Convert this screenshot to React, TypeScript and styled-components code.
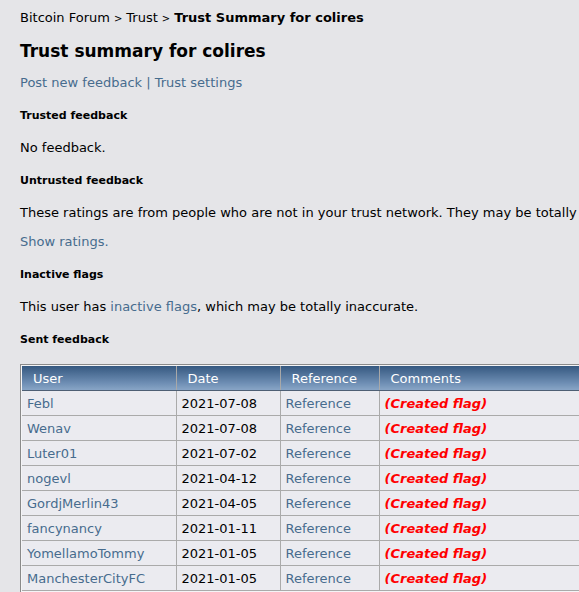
import React from "react";
import styled, { createGlobalStyle } from "styled-components";

const GlobalStyle = createGlobalStyle`
  html, body {
    margin: 0;
    padding: 0;
    overflow: hidden;
    background: #e5e5e8;
  }
  body {
    font-family: "DejaVu Sans", Verdana, sans-serif;
    color: #000;
  }
`;

const Page = styled.div`
  padding: 10px 0 0 20px;
  width: 700px;
`;

const Link = styled.a`
  color: #476c8e;
  text-decoration: none;
`;

const Breadcrumb = styled.div`
  font-size: 13px;
  line-height: 16px;
  white-space: nowrap;

  b {
    font-weight: bold;
  }
`;

const Sep = styled.span`
  font-size: 10px;
  margin: 0 4px;
`;

const Title = styled.h1`
  font-size: 17px;
  line-height: 20px;
  font-weight: bold;
  margin: 14px 0 0;
`;

const Actions = styled.div`
  font-size: 13px;
  line-height: 16px;
  margin-top: 14px;
  color: #476c8e;
`;

const Section = styled.h3`
  font-size: 11px;
  line-height: 14px;
  font-weight: bold;
  margin: 18px 0 0;
`;

const Text = styled.p<{ $gap?: number }>`
  font-size: 13px;
  line-height: 16px;
  margin: ${(p) => p.$gap ?? 17}px 0 0;
  white-space: nowrap;
`;

const TableFrame = styled.div`
  margin-top: 17px;
  display: inline-block;
  border: 1px solid #8a8a8a;
  padding: 1px;
  background: #f4f4f6;
`;

const Table = styled.table`
  border-collapse: collapse;
  table-layout: fixed;
  width: 607px;
  font-size: 13px;
`;

const HeadCell = styled.th`
  height: 24px;
  padding: 0 0 0 11px;
  text-align: left;
  font-weight: normal;
  color: #fff;
  background: linear-gradient(#355880, #6d8db3 70%, #88a5c6);
  border-left: 1px solid #a8a8a8;
  border-bottom: 1px solid #4e5f74;
  &:first-child {
    border-left: none;
  }
`;

const Cell = styled.td<{ $tone?: "link" | "plain" | "flag" }>`
  height: 24px;
  padding: 0 0 0 5px;
  background: #ebebf0;
  border: 1px solid #aaaaaa;
  white-space: nowrap;
  color: ${(p) =>
    p.$tone === "link" ? "#476c8e" : p.$tone === "flag" ? "#ff0000" : "#000"};
  font-weight: ${(p) => (p.$tone === "flag" ? "bold" : "normal")};
  font-style: ${(p) => (p.$tone === "flag" ? "italic" : "normal")};
  &:first-child {
    border-left: none;
  }
`;

const rows = [
  ["Febl", "2021-07-08"],
  ["Wenav", "2021-07-08"],
  ["Luter01", "2021-07-02"],
  ["nogevl", "2021-04-12"],
  ["GordjMerlin43", "2021-04-05"],
  ["fancynancy", "2021-01-11"],
  ["YomellamoTommy", "2021-01-05"],
  ["ManchesterCityFC", "2021-01-05"],
];

export default function App() {
  return (
    <>
      <GlobalStyle />
      <Page>
        <Breadcrumb>
          Bitcoin Forum<Sep>&gt;</Sep>Trust<Sep>&gt;</Sep>
          <b>Trust Summary for colires</b>
        </Breadcrumb>
        <Title>Trust summary for colires</Title>
        <Actions>
          <Link href="#">Post new feedback</Link> | <Link href="#">Trust settings</Link>
        </Actions>

        <Section>Trusted feedback</Section>
        <Text>No feedback.</Text>

        <Section>Untrusted feedback</Section>
        <Text>
          These ratings are from people who are not in your trust network. They may be totally
          inaccurate.
        </Text>
        <Text $gap={13}>
          <Link href="#">Show ratings.</Link>
        </Text>

        <Section>Inactive flags</Section>
        <Text>
          This user has <Link href="#">inactive flags</Link>, which may be totally inaccurate.
        </Text>

        <Section>Sent feedback</Section>
        <TableFrame>
          <Table>
            <colgroup>
              <col style={{ width: 154 }} />
              <col style={{ width: 104 }} />
              <col style={{ width: 99 }} />
              <col style={{ width: 250 }} />
            </colgroup>
            <thead>
              <tr>
                <HeadCell>User</HeadCell>
                <HeadCell>Date</HeadCell>
                <HeadCell>Reference</HeadCell>
                <HeadCell>Comments</HeadCell>
              </tr>
            </thead>
            <tbody>
              {rows.map(([user, date]) => (
                <tr key={user}>
                  <Cell $tone="link">{user}</Cell>
                  <Cell>{date}</Cell>
                  <Cell $tone="link">Reference</Cell>
                  <Cell $tone="flag">(Created flag)</Cell>
                </tr>
              ))}
            </tbody>
          </Table>
        </TableFrame>
      </Page>
    </>
  );
}
